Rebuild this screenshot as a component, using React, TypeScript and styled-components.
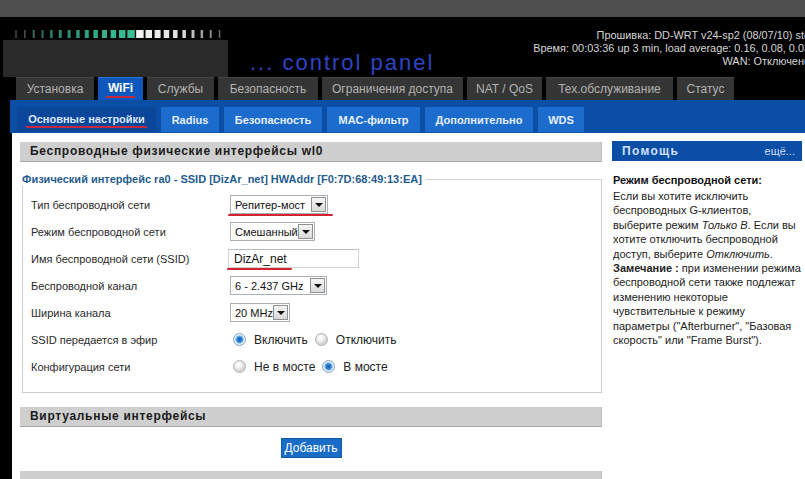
import React from "react";
import styled, { createGlobalStyle } from "styled-components";

const Global = createGlobalStyle`
  html, body { margin: 0; padding: 0; overflow: hidden; background: #000; }
  body { font-family: "Liberation Sans", Arial, sans-serif; }
  * { box-sizing: border-box; }
`;

const Page = styled.div`
  width: 805px;
  height: 479px;
  overflow: hidden;
  background: #000;
`;

const TopStrip = styled.div`
  height: 17px;
  background: #4e4e4e;
`;

const Header = styled.header`
  display: flex;
  height: 60px;
  background: #000;
`;

const LogoCol = styled.div`
  width: 225px;
  margin-left: 3px;
  display: flex;
  flex-direction: column;
`;

const Bars = styled.svg`
  display: block;
  width: 225px;
  height: 23px;
`;

const DarkBlock = styled.div`
  flex: 1;
  background: #2a2a2a;
`;

const Title = styled.div`
  margin-left: 22px;
  align-self: flex-end;
  padding-bottom: 3px;
  font-size: 22px;
  line-height: 22px;
  color: #2f43c6;
  letter-spacing: 2px;
  white-space: nowrap;
`;

const Info = styled.div`
  flex: 1;
  margin-right: -5px;
  padding-top: 12px;
  text-align: right;
  font-size: 10.9px;
  line-height: 13px;
  color: #d6d6d6;
  white-space: nowrap;
`;

const TabRow = styled.nav`
  display: flex;
  gap: 4px;
  height: 23px;
  padding-left: 16px;
  background: #000;
`;

const Tab = styled.div<{ $w: number; $active?: boolean }>`
  width: ${(p) => p.$w}px;
  display: flex;
  align-items: center;
  justify-content: center;
  font-size: 12px;
  white-space: nowrap;
  background: ${(p) => (p.$active ? "#0e58bd" : "#353535")};
  color: ${(p) => (p.$active ? "#ffffff" : "#b2b2b2")};
  font-weight: ${(p) => (p.$active ? 700 : 400)};
  border-top: 1px solid ${(p) => (p.$active ? "#2a72d0" : "#444")};
`;

const Marked = styled.span`
  padding: 1px 2px 1px;
  border-bottom: 2px solid #c8283e;
`;

const Frame = styled.div`
  margin-left: 10px;
  display: flex;
  flex-direction: column;
`;

const SubBar = styled.div`
  display: flex;
  gap: 5px;
  height: 33px;
  padding: 7px 0 1px 7px;
  background: #0b4ea6;
`;

const SubTab = styled.div<{ $w: number; $active?: boolean }>`
  width: ${(p) => p.$w}px;
  display: flex;
  align-items: center;
  justify-content: center;
  font-size: 11px;
  font-weight: 700;
  white-space: nowrap;
  color: ${(p) => (p.$active ? "#dfe8ff" : "#e8eeff")};
  background: ${(p) => (p.$active ? "#0a4699" : "#1b6ccd")};
`;

const Content = styled.div`
  background: #fff;
  margin-left: 2px;
  padding: 9px 0 0 8px;
  display: grid;
  grid-template-columns: 582px 190px;
  column-gap: 10px;
  align-items: start;
  height: 360px;
`;

const MainCol = styled.div`
  display: flex;
  flex-direction: column;
`;

const SectionHeader = styled.div`
  height: 20px;
  line-height: 19px;
  background: #cfcfcf;
  border-bottom: 1px solid #a9a9a9;
  border-right: 1px solid #bdbdbd;
  padding-left: 10px;
  font-size: 12px;
  font-weight: 700;
  letter-spacing: 0.7px;
  color: #1b1b1b;
  white-space: nowrap;
`;

const Fieldset = styled.fieldset`
  margin: 11px 0 0 2px;
  width: 580px;
  border: 1px solid #cfcfcf;
  padding: 5px 0 12px 0;
  min-width: 0;
`;

const Legend = styled.legend`
  padding: 0 4px 0 0;
  margin-left: -1px;
  font-size: 11px;
  line-height: 13px;
  font-weight: 700;
  color: #1f5c8e;
  white-space: nowrap;
`;

const Row = styled.div`
  display: flex;
  align-items: center;
  height: 27px;
  padding-left: 8px;
`;

const Label = styled.div`
  width: 199px;
  font-size: 11px;
  color: #2a2a2a;
  white-space: nowrap;
`;

const Control = styled.div`
  position: relative;
  display: flex;
  align-items: center;
`;

const SelectBox = styled.div<{ $w: number }>`
  display: flex;
  align-items: center;
  width: ${(p) => p.$w}px;
  height: 19px;
  border: 1px solid #a9b0b6;
  background: #fff;
  font-size: 11px;
  color: #111;
  padding-left: 4px;
`;

const SelectText = styled.span`
  flex: 1;
  white-space: nowrap;
`;

const ArrowBtn = styled.span`
  width: 15px;
  height: 15px;
  margin-right: 1px;
  border: 1px solid #8f9090;
  background: linear-gradient(#f6f6f6, #d9d9d9);
  display: flex;
  align-items: center;
  justify-content: center;
  &::after {
    content: "";
    width: 0;
    height: 0;
    border-left: 4px solid transparent;
    border-right: 4px solid transparent;
    border-top: 4px solid #111;
    margin-top: 1px;
  }
`;

const TextInput = styled.div`
  width: 131px;
  height: 19px;
  margin-left: -2px;
  border: 1px solid #cfd3d6;
  border-top-color: #b9bdc1;
  padding-left: 5px;
  display: flex;
  align-items: center;
  font-size: 12px;
  color: #111;
`;

const RedMark = styled.span<{ $left: number; $width: number }>`
  position: absolute;
  left: ${(p) => p.$left}px;
  width: ${(p) => p.$width}px;
  bottom: -2px;
  height: 2px;
  background: #d42231;
  border-radius: 1px;
`;

const RadioGroup = styled.div`
  display: flex;
  align-items: center;
  padding-left: 3px;
`;

const RadioDot = styled.span<{ $on?: boolean }>`
  width: 13px;
  height: 13px;
  border-radius: 50%;
  border: 1px solid ${(p) => (p.$on ? "#8aa2bb" : "#b2b2b2")};
  background: ${(p) =>
    p.$on
      ? "radial-gradient(circle at 50% 50%, #1a5cab 0, #2f7fd3 2.5px, #6fb0ec 3.5px, #dcecfb 4.5px, #f4f8fc 6px)"
      : "radial-gradient(circle at 40% 35%, #ffffff 0, #f2f2f2 3px, #d4d4d4 6px)"};
  flex-shrink: 0;
`;

const RadioLabel = styled.span`
  margin: 0 7px 0 8px;
  font-size: 12px;
  color: #222;
  white-space: nowrap;
`;

const AddWrap = styled.div`
  display: flex;
  justify-content: center;
  padding: 11px 0 13px;
`;

const AddButton = styled.div`
  width: 61px;
  height: 20px;
  background: #1a6dc7;
  border: 1px solid #115db0;
  color: #fff;
  font-size: 12px;
  display: flex;
  align-items: center;
  justify-content: center;
`;

const Gap = styled.div<{ $h: number }>`
  height: ${(p) => p.$h}px;
`;

const HelpCol = styled.aside`
  margin-top: -1px;
`;

const HelpHeader = styled.div`
  height: 20px;
  background: #0b4ea6;
  display: flex;
  align-items: center;
  justify-content: space-between;
  padding: 0 7px 0 10px;
`;

const HelpTitleBar = styled.span`
  font-size: 12px;
  font-weight: 700;
  letter-spacing: 1.3px;
  color: #d2e1ff;
`;

const HelpMore = styled.span`
  font-size: 11px;
  color: #cfdfff;
`;

const HelpTitle = styled.div`
  margin-top: 12px;
  padding-left: 1px;
  font-size: 11px;
  line-height: 14px;
  font-weight: 700;
  color: #111;
  white-space: nowrap;
`;

const HelpText = styled.p`
  margin: 2px 0 0;
  padding-left: 1px;
  font-size: 11px;
  line-height: 14.4px;
  color: #222;
  white-space: nowrap;
`;

const tabs = [
  { t: "Установка", w: 78 },
  { t: "WiFi", w: 45, a: true },
  { t: "Службы", w: 67 },
  { t: "Безопасность", w: 100 },
  { t: "Ограничения доступа", w: 141 },
  { t: "NAT / QoS", w: 75 },
  { t: "Тех.обслуживание", w: 127 },
  { t: "Статус", w: 57 },
];

const subTabs = [
  { t: "Основные настройки", w: 139, a: true },
  { t: "Radius", w: 58 },
  { t: "Безопасность", w: 98 },
  { t: "MAC-фильтр", w: 93 },
  { t: "Дополнительно", w: 108 },
  { t: "WDS", w: 46 },
];

const barWidths = [1.5, 1.5, 2, 2, 2.5, 3, 3, 3.5, 4, 4.5, 5, 5.5, 6.5, 7.5, 7.5, 6.5, 6, 5.5, 4.5, 3.5, 3, 2.5, 2, 1.5];
const barColors = [
  "#4a4a4a", "#4f5554", "#3c6a62", "#2e7466", "#2d7d6c", "#2d8672", "#2e8f78", "#2f977e",
  "#30a083", "#31a787", "#33ae8c", "#35b490", "#37b993", "#3abd96", "#f2f2f2", "#eeeeee",
  "#eaeaea", "#e6e6e6", "#e0e0e0", "#d8d8d8", "#bdbdbd", "#a0a0a0", "#8a8a8a", "#6a6a6a",
];

function SignalBars() {
  return (
    <Bars viewBox="0 0 225 23">
      {barWidths.map((w, i) => {
        const cx = 13 + i * 8.85;
        return <rect key={i} x={cx - w / 2} y={13} width={w} height={8} fill={barColors[i]} />;
      })}
    </Bars>
  );
}

function Select({ w, children }: { w: number; children: React.ReactNode }) {
  return (
    <SelectBox $w={w}>
      <SelectText>{children}</SelectText>
      <ArrowBtn />
    </SelectBox>
  );
}

export default function App() {
  return (
    <Page>
      <Global />
      <TopStrip />
      <Header>
        <LogoCol>
          <SignalBars />
          <DarkBlock />
        </LogoCol>
        <Title>... control panel</Title>
        <Info>
          Прошивка: DD-WRT v24-sp2 (08/07/10) std
          <br />
          Время: 00:03:36 up 3 min, load average: 0.16, 0.08, 0.03
          <br />
          WAN: Отключено
        </Info>
      </Header>
      <TabRow>
        {tabs.map((t) => (
          <Tab key={t.t} $w={t.w} $active={t.a}>
            {t.a ? <Marked>{t.t}</Marked> : t.t}
          </Tab>
        ))}
      </TabRow>
      <Frame>
        <SubBar>
          {subTabs.map((t) => (
            <SubTab key={t.t} $w={t.w} $active={t.a}>
              {t.a ? <Marked>{t.t}</Marked> : t.t}
            </SubTab>
          ))}
        </SubBar>
        <Content>
          <MainCol>
            <SectionHeader>Беспроводные физические интерфейсы wl0</SectionHeader>
            <Fieldset>
              <Legend>Физический интерфейс ra0 - SSID [DizAr_net] HWAddr [F0:7D:68:49:13:EA]</Legend>
              <Row>
                <Label>Тип беспроводной сети</Label>
                <Control>
                  <Select w={98}>Репитер-мост</Select>
                  <RedMark $left={-2} $width={105} />
                </Control>
              </Row>
              <Row>
                <Label>Режим беспроводной сети</Label>
                <Control>
                  <Select w={85}>Смешанный</Select>
                </Control>
              </Row>
              <Row>
                <Label>Имя беспроводной сети (SSID)</Label>
                <Control>
                  <TextInput>DizAr_net</TextInput>
                  <RedMark $left={-3} $width={65} />
                </Control>
              </Row>
              <Row>
                <Label>Беспроводной канал</Label>
                <Control>
                  <Select w={97}>6 - 2.437 GHz</Select>
                </Control>
              </Row>
              <Row>
                <Label>Ширина канала</Label>
                <Control>
                  <Select w={60}>20 MHz</Select>
                </Control>
              </Row>
              <Row>
                <Label>SSID передается в эфир</Label>
                <RadioGroup>
                  <RadioDot $on />
                  <RadioLabel>Включить</RadioLabel>
                  <RadioDot />
                  <RadioLabel>Отключить</RadioLabel>
                </RadioGroup>
              </Row>
              <Row>
                <Label>Конфигурация сети</Label>
                <RadioGroup>
                  <RadioDot />
                  <RadioLabel>Не в мосте</RadioLabel>
                  <RadioDot $on />
                  <RadioLabel>В мосте</RadioLabel>
                </RadioGroup>
              </Row>
            </Fieldset>
            <Gap $h={14} />
            <SectionHeader>Виртуальные интерфейсы</SectionHeader>
            <AddWrap>
              <AddButton>Добавить</AddButton>
            </AddWrap>
            <SectionHeader />
          </MainCol>
          <HelpCol>
            <HelpHeader>
              <HelpTitleBar>Помощь</HelpTitleBar>
              <HelpMore>ещё...</HelpMore>
            </HelpHeader>
            <HelpTitle>Режим беспроводной сети:</HelpTitle>
            <HelpText>
              Если вы хотите исключить
              <br />
              беспроводных G-клиентов,
              <br />
              выберите режим <i>Только B</i>. Если вы
              <br />
              хотите отключить беспроводной
              <br />
              доступ, выберите <i>Отключить</i>.
              <br />
              <b>Замечание :</b> при изменении режима
              <br />
              беспроводной сети также подлежат
              <br />
              изменению некоторые
              <br />
              чувствительные к режиму
              <br />
              параметры ("Afterburner", "Базовая
              <br />
              скорость" или "Frame Burst").
            </HelpText>
          </HelpCol>
        </Content>
      </Frame>
    </Page>
  );
}
